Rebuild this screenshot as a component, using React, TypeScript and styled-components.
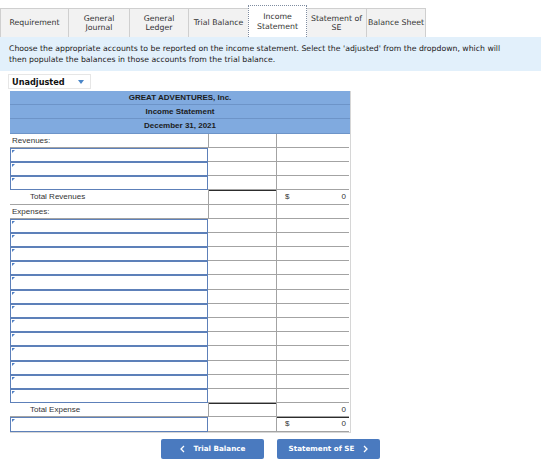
import React from "react"
import styled, { createGlobalStyle, css } from "styled-components"

const GlobalStyle = createGlobalStyle`
  html, body {
    margin: 0;
    padding: 0;
    background: #ffffff;
  }
  body {
    font-family: "DejaVu Sans", Verdana, sans-serif;
    color: #222;
  }
`

const Page = styled.div`
  width: 541px;
  padding-top: 5px;
`

const Tabs = styled.div`
  display: flex;
  align-items: flex-end;
  height: 32px;
`

const Tab = styled.div<{ $width: number; $active?: boolean }>`
  box-sizing: border-box;
  width: ${({ $width }) => $width}px;
  height: 29px;
  display: flex;
  align-items: center;
  justify-content: center;
  text-align: center;
  font-size: 7.8px;
  line-height: 9.5px;
  color: #333;
  background: #f2f2f2;
  border: 1px solid #cfcfcf;
  border-bottom: none;
  margin-right: -1px;
  white-space: pre-line;

  ${({ $active }) =>
    $active &&
    css`
      height: 32px;
      background: #ffffff;
      border: 1px dotted #7f8ca0;
      border-bottom: none;
      position: relative;
      z-index: 1;
    `}
`

const Info = styled.div`
  box-sizing: border-box;
  height: 34px;
  background: #e2f0fb;
  padding: 6px 36px 0 9px;
  font-size: 7.75px;
  line-height: 11px;
  color: #222;
`

const Select = styled.div`
  box-sizing: border-box;
  margin: 3px 0 0 8px;
  width: 83px;
  height: 15px;
  display: flex;
  align-items: center;
  justify-content: space-between;
  padding: 0 6px 0 3px;
  border: 1px solid #e6e6e6;
  font-weight: bold;
  font-size: 8.2px;
  color: #111;
`

const Caret = styled.span`
  width: 0;
  height: 0;
  border-left: 3.5px solid transparent;
  border-right: 3.5px solid transparent;
  border-top: 4px solid #4a86c8;
`

const Sheet = styled.div`
  margin: 2px 0 0 10px;
  width: 340px;
  border-right: 1px solid #d6d6d6;
  border-bottom: 1px solid #d6d6d6;
  font-family: "Liberation Sans", Arial, sans-serif;
  font-size: 8px;
  color: #333;
`

const HeadRow = styled.div`
  box-sizing: border-box;
  height: 14.2px;
  background: #80aadf;
  border-bottom: 1px solid #6d94c8;
  display: flex;
  align-items: center;
  justify-content: center;
  font-weight: bold;
  color: #1c1c1c;
`

const Row = styled.div`
  display: grid;
  grid-template-columns: 198px 68px 73px;
  height: 14.2px;
`

const Cell = styled.div<{ $line?: boolean; $dark?: boolean; $indent?: number }>`
  box-sizing: border-box;
  border-bottom: 1px solid #a3a3a3;
  ${({ $line }) => $line && "border-left: 1px solid #a3a3a3;"}
  ${({ $dark }) => $dark && "box-shadow: inset 0 1px 0 #2c2c2c;"}
  padding: 0 3px 0 ${({ $indent }) => $indent ?? 2}px;
  display: flex;
  align-items: center;
  justify-content: space-between;
  white-space: nowrap;
`

const InputCell = styled.div`
  box-sizing: border-box;
  position: relative;
  border: 1px solid #5d80b9;
  background: #ffffff;

  &::before {
    content: "";
    position: absolute;
    left: 1px;
    top: 1px;
    border-top: 3px solid #4f7fc4;
    border-right: 3px solid transparent;
  }
`

const Nav = styled.div`
  display: flex;
  justify-content: center;
  gap: 13px;
  margin-top: 6px;
`

const NavButton = styled.div`
  box-sizing: border-box;
  width: 103px;
  height: 20px;
  background: #4a7abf;
  border-radius: 2px;
  color: #ffffff;
  font-family: "DejaVu Sans", Verdana, sans-serif;
  font-weight: bold;
  font-size: 7.2px;
  display: flex;
  align-items: center;
  justify-content: center;
  gap: 9px;
`

const Chevron = ({ dir }: { dir: "left" | "right" }) => (
  <svg width="5" height="8" viewBox="0 0 5 8">
    <path
      d={dir === "left" ? "M4 1 L1 4 L4 7" : "M1 1 L4 4 L1 7"}
      fill="none"
      stroke="#ffffff"
      strokeWidth="1.3"
    />
  </svg>
)

const tabs = [
  { label: "Requirement", w: 69 },
  { label: "General\nJournal", w: 62 },
  { label: "General\nLedger", w: 60 },
  { label: "Trial Balance", w: 61 },
  { label: "Income\nStatement", w: 59, active: true },
  { label: "Statement of\nSE", w: 61 },
  { label: "Balance Sheet", w: 60 },
]

const InputRow = () => (
  <Row>
    <InputCell />
    <Cell />
    <Cell $line />
  </Row>
)

export default function App() {
  return (
    <Page>
      <GlobalStyle />
      <Tabs>
        {tabs.map((t) => (
          <Tab key={t.label} $width={t.w} $active={t.active}>
            {t.label}
          </Tab>
        ))}
      </Tabs>
      <Info>
        Choose the appropriate accounts to be reported on the income statement. Select the 'adjusted' from the dropdown, which will then populate the balances in those accounts from the trial balance.
      </Info>
      <Select>
        Unadjusted
        <Caret />
      </Select>
      <Sheet>
        <HeadRow>GREAT ADVENTURES, Inc.</HeadRow>
        <HeadRow>Income Statement</HeadRow>
        <HeadRow>December 31, 2021</HeadRow>
        <Row>
          <Cell>Revenues:</Cell>
          <Cell $line />
          <Cell $line />
        </Row>
        {[0, 1, 2].map((i) => (
          <InputRow key={`r${i}`} />
        ))}
        <Row>
          <Cell $indent={20}>Total Revenues</Cell>
          <Cell $line $dark />
          <Cell $line $indent={8}>
            <span>$</span>
            <span>0</span>
          </Cell>
        </Row>
        <Row>
          <Cell>Expenses:</Cell>
          <Cell $line />
          <Cell $line />
        </Row>
        {Array.from({ length: 13 }).map((_, i) => (
          <InputRow key={`e${i}`} />
        ))}
        <Row>
          <Cell $indent={20}>Total Expense</Cell>
          <Cell $line $dark />
          <Cell $line>
            <span />
            <span>0</span>
          </Cell>
        </Row>
        <Row>
          <InputCell />
          <Cell />
          <Cell $line $dark $indent={8}>
            <span>$</span>
            <span>0</span>
          </Cell>
        </Row>
      </Sheet>
      <Nav>
        <NavButton>
          <Chevron dir="left" />
          Trial Balance
        </NavButton>
        <NavButton>
          Statement of SE
          <Chevron dir="right" />
        </NavButton>
      </Nav>
    </Page>
  )
}
